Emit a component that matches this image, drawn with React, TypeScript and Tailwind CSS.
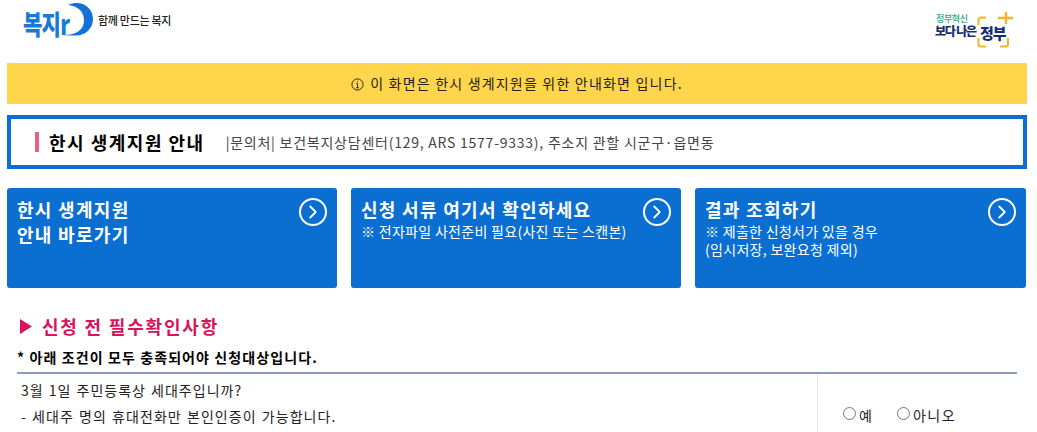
import { ChevronRight } from "lucide-react";

const font = { fontFamily: '"Noto Sans CJK KR", "Noto Sans", sans-serif' };

function BokjiLogo() {
  return (
    <div className="flex items-center">
      <div className="relative h-[36px] w-[72px]">
        <svg viewBox="0 0 36 36" className="absolute left-[38px] top-0 h-[36px] w-[36px]">
          <path d="M8 2C11 .5 14 0 17 0C26 0 33 7 33 16C33 26 25 32.500 16 32.500C11 32.500 6 32.500 3 32C16 32.500 24 27 24 17C24 8 17 3 8 2Z" fill="#1272d6" />
        </svg>
        <span className="absolute left-[1px] top-[5px] origin-left scale-x-[0.78] text-[27px] leading-[32px] font-black tracking-[-1px] whitespace-nowrap text-[#1a78d8]">
          복지r
        </span>
      </div>
      <span className="ml-[4px] -mt-[1px] text-[11px] font-medium tracking-[-0.3px] text-[#222]">함께 만드는 복지</span>
    </div>
  );
}

function GovLogo() {
  return (
    <div className="relative h-[40px] w-[78px]">
      <span className="absolute left-[1px] top-[3px] text-[9px] leading-[8px] font-medium tracking-[-0.4px] whitespace-nowrap text-[#1fa77f]">정부혁신</span>
      <span className="absolute left-0 top-[12px] text-[12px] leading-[13px] font-black tracking-[-1.2px] whitespace-nowrap text-[#16306f]">보다 나은</span>
      <span className="absolute left-[45px] top-[12px] text-[15px] leading-[18px] font-black tracking-[-1px] whitespace-nowrap text-[#16306f]">정부</span>
      <svg viewBox="0 0 38 36" className="absolute left-[42px] top-0 h-[36px] w-[38px]">
        <path d="M1.500 13V8a2.500 2.500 0 0 1 2.500-2.500H9M1.500 26v6.500a2 2 0 0 0 2 2H9M23 34.500h6a2 2 0 0 0 2-2V26" fill="none" stroke="#f5b324" strokeWidth="2" />
        <path d="M29 0v12M21 6h15" fill="none" stroke="#f5b324" strokeWidth="2.400" />
      </svg>
    </div>
  );
}

function Card({ title, notes }: { title: string[]; notes: string[] }) {
  return (
    <a className="relative block h-[100px] rounded-[3px] bg-[#0b6fd2] px-[10px] pt-[9px] text-white">
      {title.map((t) => (
        <div key={t} className="text-[18px] leading-[25px] font-bold tracking-[1.3px]">{t}</div>
      ))}
      {notes.map((n) => (
        <div key={n} className="text-[14px] leading-[18px] tracking-[0.3px]">{n}</div>
      ))}
      <span className="absolute right-[10px] top-[10px] flex h-[28px] w-[28px] items-center justify-center rounded-full border-2 border-white">
        <ChevronRight className="h-[22px] w-[22px]" strokeWidth={2} />
      </span>
    </a>
  );
}

export default function App() {
  return (
    <div className="h-[432px] overflow-hidden bg-white" style={font}>
      <header className="flex h-[63px] items-start justify-between pl-[22px] pr-[24px]">
        <div className="pt-[3px]"><BokjiLogo /></div>
        <div className="pt-[12px]"><GovLogo /></div>
      </header>

      <div className="mx-[7px] w-[1020px]">
        <div className="flex h-[41px] items-center justify-center bg-[#ffd54c] text-[14px] tracking-[1.2px] text-[#222]">
          <svg viewBox="0 0 14 14" className="mr-[6px] mt-[2px] h-[13px] w-[13px]" fill="none" stroke="#222" strokeWidth="1">
            <circle cx="7" cy="7" r="6" />
            <path d="M7 6v4.500M5.800 6H7M5.500 10.500h3M7 3.500v1" />
          </svg>
          이 화면은 한시 생계지원을 위한 안내화면 입니다.
        </div>

        <div className="mt-[11px] flex h-[54px] items-center border-4 border-[#0b6fd2] pl-[24px]">
          <span className="h-[20px] w-[4px] bg-[#e8607c]" />
          <h1 className="ml-[10px] text-[18px] font-bold tracking-[1.5px] text-black">한시 생계지원 안내</h1>
          <p className="ml-[21px] text-[14px] tracking-[0.76px] text-[#444]">|문의처| 보건복지상담센터(129, ARS 1577-9333), 주소지 관할 시군구·읍면동</p>
        </div>

        <div className="mt-[19px] grid grid-cols-[330px_330px_331px] gap-[14px]">
          <Card title={["한시 생계지원", "안내 바로가기"]} notes={[]} />
          <Card title={["신청 서류 여기서 확인하세요"]} notes={["※ 전자파일 사전준비 필요(사진 또는 스캔본)"]} />
          <Card title={["결과 조회하기"]} notes={["※ 제출한 신청서가 있을 경우", "(임시저장, 보완요청 제외)"]} />
        </div>

        <h2 className="mt-[25px] flex items-center pl-[13px] text-[18px] leading-[26px] font-bold tracking-[1.8px] text-[#d9125c]">
          <svg viewBox="0 0 12 15" className="mr-[10px] h-[15px] w-[12px]">
            <path d="M0 0L12 7.500L0 15Z" fill="#d9125c" />
          </svg>
          신청 전 필수확인사항
        </h2>
        <p className="mt-[8px] pl-[10px] text-[14px] leading-[20px] font-bold tracking-[1.1px] text-black">* 아래 조건이 모두 충족되어야 신청대상입니다.</p>

        <div className="ml-[10px] mr-[10px] mt-[5px] flex border-t-2 border-[#8a9dbb]">
          <div className="flex-1 pl-[4px] pt-[3px] text-[14px] leading-[26px] text-[#222] [word-spacing:1px]">
            <p className="tracking-[1px]">3월 1일 주민등록상 세대주입니까?</p>
            <p className="tracking-[1.05px]">- 세대주 명의 휴대전화만 본인인증이 가능합니다.</p>
          </div>
          <div className="flex h-[60px] w-[200px] items-start gap-[25px] border-l border-[#dfe6f2] pl-[25px] pt-[31px] text-[14px] leading-[20px] text-[#222]">
            <label className="flex items-center gap-[3px]">
              <input type="radio" name="q1" className="m-0 -mt-[4px] h-[13px] w-[13px]" />예
            </label>
            <label className="flex items-center gap-[3px] tracking-[1.5px]">
              <input type="radio" name="q1" className="m-0 -mt-[4px] h-[13px] w-[13px]" />아니오
            </label>
          </div>
        </div>
      </div>
    </div>
  );
}
